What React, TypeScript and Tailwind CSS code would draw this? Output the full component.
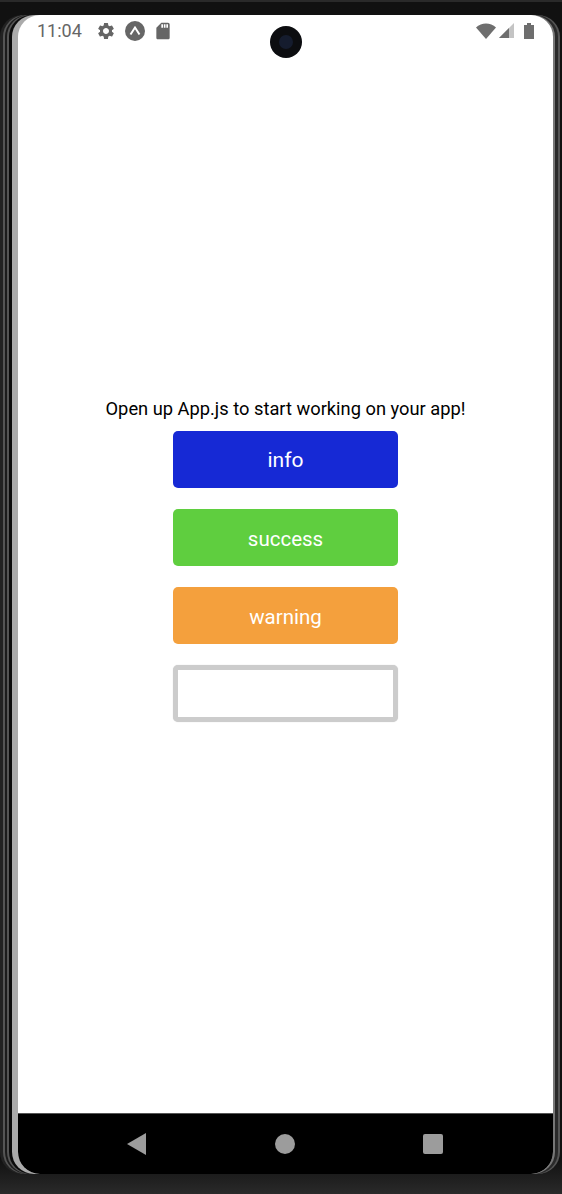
import React from "react";
import { MdSettings, MdSdStorage } from "react-icons/md";

const buttons = [
  { label: "info", className: "bg-[#1629d5] text-[21px] pt-[2px]" },
  { label: "success", className: "bg-[#5fce3f] text-[20.5px] pt-[4px]" },
  { label: "warning", className: "bg-[#f4a03d] text-[20.5px] pt-[4px]" },
];

const StatusBar = () => (
  <div className="relative h-[31px] flex items-center justify-between pl-[19px] pr-[19px] text-[#666666]">
    <div className="flex items-center">
      <span className="text-[18px] leading-none w-[60px]">11:04</span>
      <MdSettings size={20} className="ml-[-1px]" />
      <svg width="20" height="20" viewBox="0 0 20 20" className="ml-[9px]">
        <circle cx="10" cy="10" r="10" fill="#666666" />
        <path d="M5.5 13.5 10 6.5l4.5 7" fill="none" stroke="#fff" strokeWidth="2" />
      </svg>
      <MdSdStorage size={20} className="ml-[8px]" />
    </div>
    <div className="flex items-center">
      <svg width="20" height="16" viewBox="0 0 20 16">
        <path d="M0 4.5C5.5-.9 14.5-.9 20 4.5L10 16z" fill="#6e6e6e" />
      </svg>
      <svg width="15" height="15" viewBox="0 0 15 15" className="ml-[3px]">
        <path d="M15 0v15H0z" fill="#c4c4c4" />
        <path d="M10 5v10H0z" fill="#6e6e6e" />
      </svg>
      <svg width="10" height="16" viewBox="0 0 10 16" className="ml-[10px]">
        <path d="M3 0h4v2h3v14H0V2h3z" fill="#6e6e6e" />
      </svg>
    </div>
    {/* front camera sits over the status bar */}
    <div className="absolute left-[252px] top-[11px] w-[32px] h-[32px] rounded-full bg-[#0c0d10] flex items-center justify-center">
      <div className="w-[14px] h-[14px] rounded-full bg-[#151c2e]" />
    </div>
  </div>
);

const NavBar = () => (
  <div className="h-[61px] bg-black border-t border-[#555555] flex items-center justify-between pl-[109px] pr-[110px]">
    <svg width="19" height="22" viewBox="0 0 19 22">
      <path d="M19 0v22L0 11z" fill="#9c9c9c" />
    </svg>
    <div className="w-[20px] h-[20px] rounded-full bg-[#9c9c9c]" />
    <div className="w-[20px] h-[20px] rounded-[2px] bg-[#9c9c9c]" />
  </div>
);

export default function App() {
  return (
    <div className="w-[562px] h-[1194px] overflow-hidden bg-gradient-to-b from-[#111111] via-[#111111] via-[97%] to-[#2a2a2a] border-t-[2px] border-[#2a2a2a] pt-[13px] pb-[20px] pl-[18px] font-['Roboto',sans-serif]">
      <div className="h-full w-[535px] rounded-[22px] overflow-hidden bg-white flex flex-col shadow-[-6px_0_0_#ababab,-9px_0_0_#0c0c0c,-11px_0_0_#555555,-13px_0_0_#1c1c1c,-15px_0_0_#555555,-18px_0_0_#222222,2px_0_0_#777777,5px_0_0_#2a2a2a,7px_0_0_#555555]">
        <StatusBar />
        <main className="flex-1 flex flex-col items-center pt-[352px]">
          <p className="text-[18.3px] leading-[21px] text-black">
            Open up App.js to start working on your app!
          </p>
          <div className="mt-[12px] flex flex-col gap-[21px]">
            {buttons.map((b) => (
              <button
                key={b.label}
                className={`w-[225px] h-[57px] rounded-[5px] text-white ${b.className}`}
              >
                {b.label}
              </button>
            ))}
            <input className="w-[225px] h-[57px] rounded-[5px] border-[5px] border-[#cccccc] bg-white outline-none shadow-[0_0_1px_#cccccc]" />
          </div>
        </main>
        <NavBar />
      </div>
    </div>
  );
}
